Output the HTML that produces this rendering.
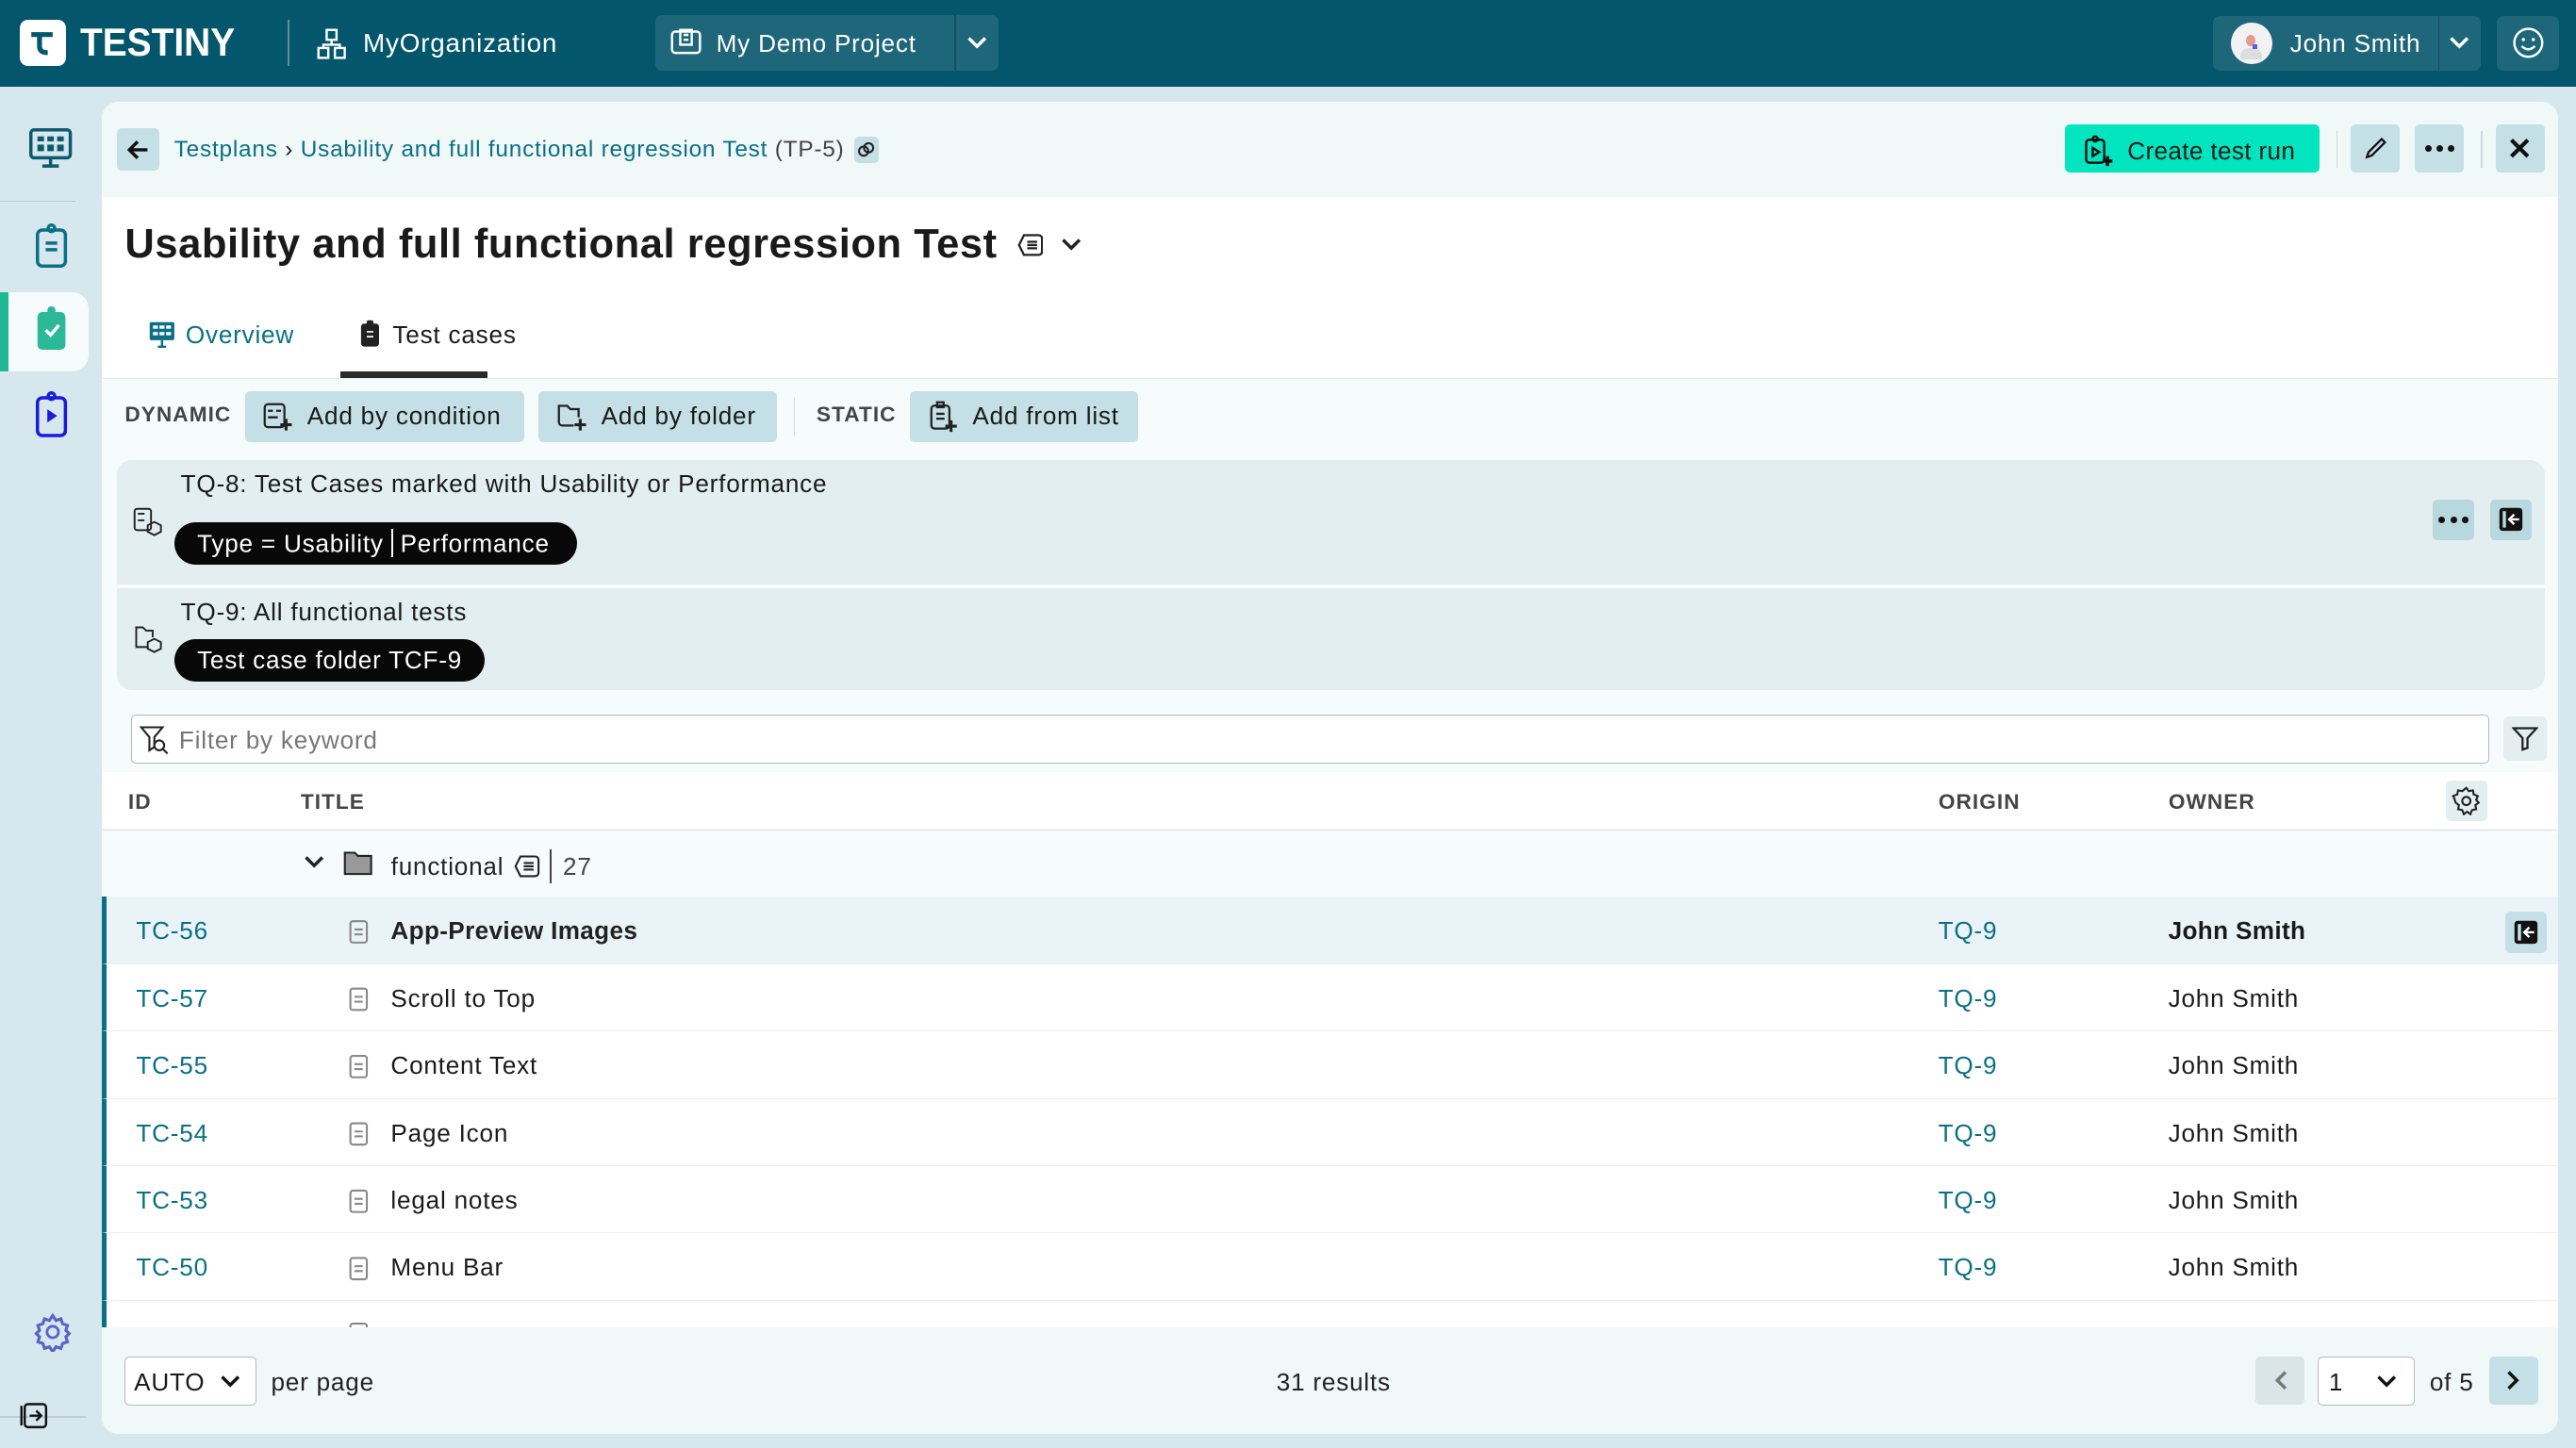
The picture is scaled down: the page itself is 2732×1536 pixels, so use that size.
<!DOCTYPE html>
<html><head><meta charset="utf-8"><style>
*{box-sizing:border-box;margin:0;padding:0}
html,body{width:2732px;height:1536px;overflow:hidden;background:#d6e7ee}
#r{zoom:1.7423;width:1568px;height:882px;position:relative;font-family:"Liberation Sans",sans-serif;color:#1a1a1a;font-size:15px;letter-spacing:.45px}
.a{position:absolute}
.top{left:0;top:0;width:1568px;height:53px;background:#03566b;color:#fff}
.tb{background:#1e6679;border-radius:4px}
.btn{background:#c4dfe5;border-radius:3px;display:flex;align-items:center;justify-content:center}
.link{color:#0b6f86}
svg{display:block}
.row{left:62px;width:1495px;height:41px;border-bottom:1px solid #eceff0;background:#fff}
.row span{position:absolute;top:12px}
.dots{display:flex;gap:3px}.dots i{width:4px;height:4px;border-radius:50%;background:#111;display:block}
</style></head><body><div id="r">
<div class="a top">
 <div class="a" style="left:12px;top:12px;width:28px;height:28px;background:#fff;border-radius:5px"><svg width="28" height="28"><path d="M7 9h13M12 9v7c0 3 2 4 5 4" stroke="#03566b" stroke-width="3" fill="none"/></svg></div>
 <div class="a" style="left:49px;top:12px;font-size:24px;font-weight:bold;letter-spacing:0;transform:scaleX(.93);transform-origin:0 0">TESTINY</div>
 <div class="a" style="left:175px;top:12px;width:1px;height:28px;background:#5d8f9c"></div>
 <svg class="a" style="left:193px;top:17px" width="18" height="20"><g stroke="#fff" stroke-width="1.4" fill="none"><rect x="6" y="1" width="6" height="6"/><rect x="1" y="12" width="6" height="6"/><rect x="11" y="12" width="6" height="6"/><path d="M9 7v3H4v2M9 10h5v2"/></g></svg>
 <div class="a" style="left:221px;top:17px;font-size:16px">MyOrganization</div>
 <div class="a tb" style="left:399px;top:9px;width:209px;height:34px"></div>
 <div class="a" style="left:581px;top:9px;width:1px;height:34px;background:#144f60"></div>
 <svg class="a" style="left:408px;top:17px" width="20" height="18"><g stroke="#fff" stroke-width="1.4" fill="none"><rect x="1" y="2" width="17" height="13" rx="2"/><rect x="6" y="1" width="7" height="9"/><path d="M8 4h3M8 7h3"/></g></svg>
 <div class="a" style="left:436px;top:18px;font-size:15px">My Demo Project</div>
 <svg class="a" style="left:588px;top:21px" width="14" height="10"><path d="M2 2l5 5 5-5" stroke="#fff" stroke-width="2" fill="none"/></svg>
 <div class="a tb" style="left:1347px;top:10px;width:163px;height:33px"></div>
 <div class="a" style="left:1484px;top:10px;width:1px;height:33px;background:#144f60"></div>
 <div class="a" style="left:1358px;top:14px;width:25px;height:25px;border-radius:50%;background:#f2f2f2"><div class="a" style="left:6px;top:15px;width:13px;height:7px;border-radius:5px 5px 0 0;background:#ddd"></div><div class="a" style="left:9px;top:7px;width:6px;height:7px;border-radius:50%;background:#e39b8f"></div><div class="a" style="left:13px;top:13px;width:3px;height:3px;background:#5560e0"></div></div>
 <div class="a" style="left:1394px;top:18px;font-size:15px">John Smith</div>
 <svg class="a" style="left:1490px;top:21px" width="14" height="10"><path d="M2 2l5 5 5-5" stroke="#fff" stroke-width="2" fill="none"/></svg>
 <div class="a tb" style="left:1520px;top:10px;width:38px;height:33px"></div>
 <svg class="a" style="left:1529px;top:16px" width="20" height="20"><circle cx="10" cy="10" r="8.5" stroke="#fff" stroke-width="1.4" fill="none"/><circle cx="7" cy="8" r="1" fill="#fff"/><circle cx="13" cy="8" r="1" fill="#fff"/><path d="M6 12q4 4 8 0" stroke="#fff" stroke-width="1.4" fill="none"/></svg>
</div>
<!-- sidebar -->
<svg class="a" style="left:18px;top:78px" width="28" height="26"><g stroke="#0d5a6e" stroke-width="2" fill="none"><rect x="1" y="1" width="24" height="17" rx="2"/><path d="M13 18v5M8 23h10"/></g><g fill="#0d5a6e"><rect x="5" y="5" width="4" height="3"/><rect x="11" y="5" width="4" height="3"/><rect x="17" y="5" width="4" height="3"/><rect x="5" y="10" width="4" height="4"/><rect x="11" y="10" width="4" height="4"/><rect x="17" y="10" width="4" height="4"/></g></svg>
<div class="a" style="left:0;top:122px;width:46px;height:1px;background:#b8ccd3"></div>
<svg class="a" style="left:22px;top:136px" width="20" height="28"><g stroke="#0b6f86" stroke-width="2" fill="none"><rect x="1" y="4" width="17" height="22" rx="3"/><circle cx="9.5" cy="3" r="2"/><path d="M6 12h7M6 16h7"/></g></svg>
<div class="a" style="left:0;top:178px;width:54px;height:48px;background:#f6fbfc;border-radius:0 10px 10px 0"></div>
<div class="a" style="left:0;top:178px;width:5px;height:48px;background:#1fb894"></div>
<svg class="a" style="left:22px;top:186px" width="20" height="30"><rect x="1" y="4" width="17" height="23" rx="3" fill="#2bb99a"/><circle cx="9.5" cy="3" r="2.5" fill="#2bb99a"/><path d="M6 15l3 3 5-6" stroke="#fff" stroke-width="2" fill="none"/></svg>
<svg class="a" style="left:22px;top:238px" width="20" height="30"><g stroke="#1a1adb" stroke-width="2" fill="none"><rect x="1" y="4" width="17" height="23" rx="3"/><circle cx="9.5" cy="3" r="2"/></g><path d="M7 11l6 4-6 4z" fill="#1a1adb"/></svg>
<svg class="a" style="left:20px;top:799px" width="24" height="24"><path d="M12 2l2 3 3-1 1 3 3 1-1 3 2 2-2 2 1 3-3 1-1 3-3-1-2 3-2-3-3 1-1-3-3-1 1-3-2-2 2-2-1-3 3-1 1-3 3 1z" stroke="#5964c7" stroke-width="1.8" fill="none"/><circle cx="12" cy="12" r="3.5" stroke="#5964c7" stroke-width="1.6" fill="none"/></svg>
<div class="a" style="left:0;top:862px;width:52px;height:1px;background:#bccdd3"></div>
<svg class="a" style="left:12px;top:853px" width="18" height="18"><g stroke="#111" stroke-width="1.4" fill="none"><rect x="3" y="2" width="13" height="14" rx="2"/><path d="M1 3v12M6 9h7M10 6l3 3-3 3"/></g></svg>
<!-- main panel -->
<div class="a" style="left:62px;top:62px;width:1495px;height:811px;background:#fff;border-radius:10px;overflow:hidden">
 <div class="a" style="left:0;top:0;width:1495px;height:58px;background:#f0f8f8"></div>
 <div class="a" style="left:0;top:168px;width:1495px;height:1px;background:#e6e8ea"></div>
 <div class="a" style="left:0;top:169px;width:1495px;height:240px;background:#f6fbfc"></div>
 <div class="a" style="left:0;top:746px;width:1495px;height:65px;background:#f0f8f8"></div>
</div>
<div class="a btn" style="left:71px;top:78px;width:26px;height:26px"><svg width="16" height="16"><path d="M14 8H3M8 3L3 8l5 5" stroke="#111" stroke-width="2" fill="none"/></svg></div>
<div class="a" style="left:106px;top:83px;font-size:14px;display:flex;align-items:center;white-space:nowrap"><span class="link">Testplans</span>&nbsp;›&nbsp;<span class="link">Usability and full functional regression Test</span>&nbsp;<span style="color:#444">(TP-5)</span>
<span class="btn" style="margin-left:6px;width:15px;height:16px"><svg width="11" height="11"><g stroke="#222" stroke-width="1.2" fill="none"><circle cx="4" cy="6.5" r="2.8"/><circle cx="7" cy="4.5" r="2.8"/></g></svg></span></div>
<div class="a" style="left:1257px;top:76px;width:155px;height:29px;background:#03e5bf;border-radius:3px"></div>
<svg class="a" style="left:1268px;top:82px" width="20" height="20"><g stroke="#111" stroke-width="1.4" fill="none"><rect x="2" y="3" width="11" height="14" rx="2"/><circle cx="7.5" cy="2.5" r="1.5"/><path d="M6 8l4 2.5-4 2.5z"/></g><path d="M15 13v6M12 16h6" stroke="#111" stroke-width="2"/></svg>
<div class="a" style="left:1295px;top:83px;font-size:15px;letter-spacing:.2px">Create test run</div>
<div class="a" style="left:1422px;top:80px;width:1px;height:22px;background:#ccdadf"></div>
<div class="a btn" style="left:1431px;top:76px;width:30px;height:29px"><svg width="16" height="16"><path d="M3 13l1-3 8-8 2 2-8 8z M3 13l3-1" stroke="#111" stroke-width="1.3" fill="none"/></svg></div>
<div class="a btn" style="left:1470px;top:76px;width:30px;height:29px"><span class="dots"><i></i><i></i><i></i></span></div>
<div class="a" style="left:1510px;top:80px;width:1px;height:22px;background:#ccdadf"></div>
<div class="a btn" style="left:1519px;top:76px;width:30px;height:29px"><svg width="14" height="14"><path d="M2 2l10 10M12 2L2 12" stroke="#111" stroke-width="2.4"/></svg></div>
<div class="a" style="left:76px;top:135px;font-size:25px;font-weight:bold;letter-spacing:.3px;display:flex;align-items:center;white-space:nowrap">Usability and full functional regression Test
<svg style="margin-left:12px" width="16" height="16"><g stroke="#222" stroke-width="1.3" fill="none"><path d="M4 2h9a2 2 0 012 2v8a2 2 0 01-2 2H4L1 8z"/><path d="M6 6h6M6 8h6M6 10h6"/></g></svg>
<svg style="margin-left:10px" width="14" height="10"><path d="M2 2l5 5 5-5" stroke="#222" stroke-width="2" fill="none"/></svg></div>
<svg class="a" style="left:90px;top:195px" width="17" height="17"><rect x="1" y="1" width="15" height="11" rx="1" fill="#0b6f86"/><g fill="#fff"><rect x="3" y="3" width="3" height="2"/><rect x="7" y="3" width="3" height="2"/><rect x="11" y="3" width="3" height="2"/><rect x="3" y="7" width="3" height="2"/><rect x="7" y="7" width="3" height="2"/><rect x="11" y="7" width="3" height="2"/></g><path d="M8.5 12v4M6 16h5" stroke="#0b6f86" stroke-width="1.4"/></svg>
<div class="a link" style="left:113px;top:195px;font-size:15px">Overview</div>
<svg class="a" style="left:219px;top:194px" width="12" height="18"><rect x="0.5" y="3" width="11" height="14" rx="2" fill="#222"/><rect x="4" y="1" width="4" height="4" rx="1" fill="#222"/><path d="M4 8h4M4 11h4" stroke="#fff" stroke-width="1"/></svg>
<div class="a" style="left:239px;top:195px;font-size:15px">Test cases</div>
<div class="a" style="left:207px;top:226px;width:90px;height:4px;background:#2a2a2a"></div>
<div class="a" style="left:76px;top:245px;font-size:13px;color:#444;letter-spacing:.6px;font-weight:bold">DYNAMIC</div>
<div class="a btn" style="left:149px;top:238px;width:170px;height:31px;justify-content:flex-start;padding-left:38px;font-size:15px">Add by condition</div>
<svg class="a" style="left:160px;top:245px" width="18" height="18"><g stroke="#222" stroke-width="1.3" fill="none"><rect x="1" y="1" width="12" height="14" rx="2"/><path d="M3 5h3M8 5h3M3 9h6"/></g><path d="M14 10v7M10.5 13.5h7" stroke="#222" stroke-width="1.8"/></svg>
<div class="a btn" style="left:328px;top:238px;width:145px;height:31px;justify-content:flex-start;padding-left:38px;font-size:15px">Add by folder</div>
<svg class="a" style="left:339px;top:245px" width="18" height="18"><path d="M10 14H3a2 2 0 01-2-2V2h5l2 2h5v5" stroke="#222" stroke-width="1.3" fill="none"/><path d="M14 10v7M10.5 13.5h7" stroke="#222" stroke-width="1.8"/></svg>
<div class="a" style="left:483px;top:242px;width:1px;height:24px;background:#d5dfe2"></div>
<div class="a" style="left:497px;top:245px;font-size:13px;color:#444;letter-spacing:.6px;font-weight:bold">STATIC</div>
<div class="a btn" style="left:554px;top:238px;width:139px;height:31px;justify-content:flex-start;padding-left:38px;font-size:15px">Add from list</div>
<svg class="a" style="left:566px;top:244px" width="18" height="20"><g stroke="#222" stroke-width="1.3" fill="none"><rect x="1" y="3" width="11" height="14" rx="2"/><rect x="4.5" y="1" width="4" height="3"/><path d="M4 8h5M4 11h5"/></g><path d="M13 12v7M9.5 15.5h7" stroke="#222" stroke-width="1.8"/></svg>
<div class="a" style="left:71px;top:280px;width:1478px;height:140px;background:#e2eef0;border-radius:9px"></div>
<div class="a" style="left:71px;top:356px;width:1478px;height:2px;background:#f6fbfc"></div>
<svg class="a" style="left:81px;top:309px" width="18" height="18"><g stroke="#222" stroke-width="1.1" fill="none"><rect x="1" y="1" width="10" height="13" rx="1.5"/><path d="M3 4h4M3 8h4"/><path d="M13 9l4 2v4l-4 2-4-2v-4z"/></g></svg>
<div class="a" style="left:110px;top:286px;font-size:15px">TQ-8: Test Cases marked with Usability or Performance</div>
<div class="a" style="left:106px;top:318px;width:245px;height:26px;background:#080808;border-radius:13px;color:#fff;font-size:15px;padding:4px 0 0 14px;white-space:nowrap">Type = Usability <span style="display:inline-block;width:1px;height:17px;background:#fff;vertical-align:-3px"></span> Performance</div>
<div class="a btn" style="left:1481px;top:304px;width:25px;height:25px;background:#b8d8de"><span class="dots"><i></i><i></i><i></i></span></div>
<div class="a btn" style="left:1516px;top:304px;width:25px;height:25px;background:#b8d8de"><svg width="16" height="16"><rect x="1" y="1" width="14" height="14" rx="2" fill="#111"/><rect x="3" y="3" width="2" height="10" fill="#b8d8de"/><path d="M13 8H8M10 5L7 8l3 3" stroke="#fff" stroke-width="1.4" fill="none"/></svg></div>
<svg class="a" style="left:81px;top:380px" width="18" height="18"><g stroke="#222" stroke-width="1.1" fill="none"><path d="M9 14H2V2h4l2 2h4v4"/><path d="M13 9l4 2v4l-4 2-4-2v-4z"/></g></svg>
<div class="a" style="left:110px;top:364px;font-size:15px">TQ-9: All functional tests</div>
<div class="a" style="left:106px;top:389px;width:189px;height:26px;background:#080808;border-radius:13px;color:#fff;font-size:15px;padding:4px 0 0 14px;white-space:nowrap">Test case folder TCF-9</div>
<div class="a" style="left:80px;top:435px;width:1435px;height:30px;background:#fff;border:1px solid #b8b8b8;border-radius:3px"></div>
<svg class="a" style="left:85px;top:441px" width="18" height="20"><path d="M1 2h13l-5 6v6l-3 2V8z" stroke="#222" stroke-width="1.2" fill="none"/><circle cx="12" cy="13" r="3" stroke="#222" stroke-width="1.2" fill="none"/><path d="M14 15l3 3" stroke="#222" stroke-width="1.2"/></svg>
<div class="a" style="left:109px;top:442px;font-size:15px;color:#777">Filter by keyword</div>
<div class="a btn" style="left:1524px;top:436px;width:26px;height:27px;background:#e2eef0"><svg width="16" height="16"><path d="M1 2h14l-5.5 6v6l-3 1V8z" stroke="#222" stroke-width="1.3" fill="none"/></svg></div>
<div class="a" style="left:62px;top:470px;width:1495px;height:36px;background:#fff;border-bottom:2px solid #eceff0"></div>
<div class="a" style="left:78px;top:481px;font-size:13px;font-weight:bold;color:#444;letter-spacing:.6px">ID</div>
<div class="a" style="left:183px;top:481px;font-size:13px;font-weight:bold;color:#444;letter-spacing:.6px">TITLE</div>
<div class="a" style="left:1180px;top:481px;font-size:13px;font-weight:bold;color:#444;letter-spacing:.6px">ORIGIN</div>
<div class="a" style="left:1320px;top:481px;font-size:13px;font-weight:bold;color:#444;letter-spacing:.6px">OWNER</div>
<div class="a btn" style="left:1489px;top:475px;width:25px;height:25px;background:#e2eef0"><svg width="18" height="18"><path d="M9 1l1.5 2 2.5-.5.5 2.5 2.5 1-1 2.3 1.5 1.7-2 1.5.5 2.5-2.5.5-1 2.5-2-1.5-2 1.5-1-2.5-2.5-.5.5-2.5-2-1.5L2 8.3 1 6l2.5-1L4 2.5 6.5 3z" stroke="#222" stroke-width="1.2" fill="none"/><circle cx="9" cy="9" r="2.5" stroke="#222" stroke-width="1.2" fill="none"/></svg></div>
<div class="a" style="left:62px;top:507px;width:1495px;height:39px;background:#f6fbfc"></div>
<svg class="a" style="left:184px;top:520px" width="14" height="10"><path d="M2 2l5 5 5-5" stroke="#222" stroke-width="2" fill="none"/></svg>
<svg class="a" style="left:209px;top:517px" width="18" height="16"><path d="M1 2h6l2 2h8v11H1z" fill="#999" stroke="#222" stroke-width="1.2"/></svg>
<div class="a" style="left:238px;top:517px;font-size:15px;color:#222;display:flex;align-items:center;white-space:nowrap">functional
<svg style="margin-left:6px" width="16" height="16"><g stroke="#222" stroke-width="1.2" fill="none"><path d="M4 2h9a2 2 0 012 2v8a2 2 0 01-2 2H4L1 8z"/><path d="M6 6h6M6 8h6M6 10h6"/></g></svg>
<span style="display:inline-block;width:1px;height:21px;background:#444;margin:0 7px 0 6px"></span><span style="color:#444">27</span></div>
<div class="a row" style="top:546px;background:#eaf3f7;border-left:3px solid #0b6f86"><span class="link" style="left:18px">TC-56</span><span style="left:173px;font-weight:bold;color:#222;letter-spacing:.2px">App-Preview Images</span><span class="link" style="left:1115px">TQ-9</span><span style="left:1255px;font-weight:bold;letter-spacing:.2px">John Smith</span></div>
<div class="a btn" style="left:1525px;top:555px;width:25px;height:25px;background:#c4dfe5"><svg width="16" height="16"><rect x="1" y="1" width="14" height="14" rx="2" fill="#111"/><rect x="3" y="3" width="2" height="10" fill="#c4dfe5"/><path d="M13 8H8M10 5L7 8l3 3" stroke="#fff" stroke-width="1.4" fill="none"/></svg></div>
<div class="a row" style="top:587px;border-left:3px solid #0b6f86"><span class="link" style="left:18px">TC-57</span><span style="left:173px">Scroll to Top</span><span class="link" style="left:1115px">TQ-9</span><span style="left:1255px">John Smith</span></div>
<div class="a row" style="top:628px;border-left:3px solid #0b6f86"><span class="link" style="left:18px">TC-55</span><span style="left:173px">Content Text</span><span class="link" style="left:1115px">TQ-9</span><span style="left:1255px">John Smith</span></div>
<div class="a row" style="top:669px;border-left:3px solid #0b6f86"><span class="link" style="left:18px">TC-54</span><span style="left:173px">Page Icon</span><span class="link" style="left:1115px">TQ-9</span><span style="left:1255px">John Smith</span></div>
<div class="a row" style="top:710px;border-left:3px solid #0b6f86"><span class="link" style="left:18px">TC-53</span><span style="left:173px">legal notes</span><span class="link" style="left:1115px">TQ-9</span><span style="left:1255px">John Smith</span></div>
<div class="a row" style="top:751px;border-left:3px solid #0b6f86"><span class="link" style="left:18px">TC-50</span><span style="left:173px">Menu Bar</span><span class="link" style="left:1115px">TQ-9</span><span style="left:1255px">John Smith</span></div>
<div class="a row" style="top:792px;height:16px;border:none;border-left:3px solid #0b6f86"></div>
<svg class="a" style="left:212px;top:558px" width="14" height="250"><g stroke="#888" stroke-width="1.2" fill="none"><rect x="1.5" y="3" width="10" height="13" rx="1.5"/><path d="M4 8h5M4 11h5"/><rect x="1.5" y="44" width="10" height="13" rx="1.5"/><path d="M4 49h5M4 52h5"/><rect x="1.5" y="85" width="10" height="13" rx="1.5"/><path d="M4 90h5M4 93h5"/><rect x="1.5" y="126" width="10" height="13" rx="1.5"/><path d="M4 131h5M4 134h5"/><rect x="1.5" y="167" width="10" height="13" rx="1.5"/><path d="M4 172h5M4 175h5"/><rect x="1.5" y="208" width="10" height="13" rx="1.5"/><path d="M4 213h5M4 216h5"/><rect x="1.5" y="248" width="10" height="13" rx="1.5"/></g></svg>
<div class="a" style="left:76px;top:826px;width:80px;height:30px;background:#fff;border:1px solid #b8b8b8;border-radius:3px;font-size:15px;padding:6px 0 0 5px">AUTO</div>
<svg class="a" style="left:133px;top:836px" width="14" height="10"><path d="M2 2l5 5 5-5" stroke="#111" stroke-width="2" fill="none"/></svg>
<div class="a" style="left:165px;top:833px;font-size:15px;color:#222">per page</div>
<div class="a" style="left:777px;top:833px;font-size:15px;color:#222">31 results</div>
<div class="a btn" style="left:1373px;top:826px;width:30px;height:29px;background:#dae5e7"><svg width="10" height="14"><path d="M8 2L3 7l5 5" stroke="#777" stroke-width="2" fill="none"/></svg></div>
<div class="a" style="left:1411px;top:826px;width:59px;height:30px;background:#fff;border:1px solid #b8b8b8;border-radius:3px;font-size:15px;padding:6px 0 0 6px">1</div>
<svg class="a" style="left:1446px;top:836px" width="14" height="10"><path d="M2 2l5 5 5-5" stroke="#111" stroke-width="2" fill="none"/></svg>
<div class="a" style="left:1479px;top:833px;font-size:15px;color:#222">of 5</div>
<div class="a btn" style="left:1515px;top:826px;width:30px;height:29px"><svg width="10" height="14"><path d="M2 2l5 5-5 5" stroke="#111" stroke-width="2" fill="none"/></svg></div>
</div></body></html>
